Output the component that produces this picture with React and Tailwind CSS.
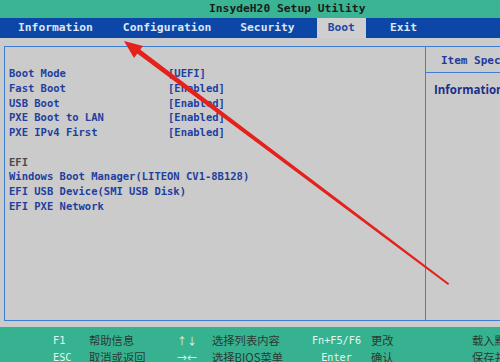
const mono = { fontFamily: '"DejaVu Sans Mono", "Liberation Mono", monospace' };

const tabs = [
  { label: "Information", ml: "ml-[7px]" },
  { label: "Configuration", ml: "ml-[8px]" },
  { label: "Security", ml: "ml-[7px]" },
  { label: "Boot", ml: "ml-[11px]", active: true },
  { label: "Exit", ml: "ml-[13px]" },
];

const items = [
  ["Boot Mode", "[UEFI]"],
  ["Fast Boot", "[Enabled]"],
  ["USB Boot", "[Enabled]"],
  ["PXE Boot to LAN", "[Enabled]"],
  ["PXE IPv4 First", "[Enabled]"],
];

const efi = [
  "Windows Boot Manager(LITEON CV1-8B128)",
  "EFI USB Device(SMI USB Disk)",
  "EFI PXE Network",
];

const footer = [
  ["F1", "帮助信息", "↑↓", "选择列表内容", "Fn+F5/F6", "更改", "载入默认值"],
  ["ESC", "取消或返回", "→←", "选择BIOS菜单", "Enter", "确认", "保存并退出"],
];

function Arrow() {
  return (
    <svg className="absolute left-0 top-0 pointer-events-none" width="500" height="362">
      <polygon points="448,285 449.2,283.4 137.5,47.5 134.5,51.5" fill="#e4211b" />
      <polygon points="124,41 143,46 134,58" fill="#e4211b" />
    </svg>
  );
}

export default function App() {
  return (
    <div className="relative w-[500px] h-[362px] overflow-hidden flex flex-col bg-[#cbcbcb]">
      <div
        className="h-[18px] shrink-0 bg-[#3ab493] pl-[209px] text-[11.3px] leading-[18px] font-bold text-[#1c1c1c]"
        style={mono}
      >
        InsydeH20 Setup Utility
      </div>

      <div className="h-[20px] shrink-0 bg-[#0c47a7] flex text-[11.3px] font-bold" style={mono}>
        {tabs.map(t => (
          <div
            key={t.label}
            className={`${t.ml} px-[11px] leading-[20px] ${t.active ? "bg-[#cfcfcf] text-[#1d4aa3]" : "text-[#dce6f3]"}`}
          >
            {t.label}
          </div>
        ))}
      </div>

      <div className="flex-1 min-h-0 pt-[8px] pl-[4px] pb-[6px]">
        <div className="h-full w-[540px] border border-[#3b7ed4] flex">
          <div className="w-[421px] shrink-0 border-r border-[#3b7ed4] pl-[4px] pt-[19px] text-[10.5px] leading-[14.75px] font-bold text-[#1f3f9e]" style={mono}>
            {items.map(([k, v]) => (
              <div key={k} className="flex">
                <span className="w-[159px] shrink-0">{k}</span>
                <span>{v}</span>
              </div>
            ))}
            <div className="h-[14.75px]" />
            <div className="text-[#4a4a4a]">EFI</div>
            {efi.map(e => (
              <div key={e}>{e}</div>
            ))}
          </div>

          <div className="flex-1 min-w-0 flex flex-col overflow-hidden">
            <div
              className="h-[26px] border-b border-[#3b7ed4] pl-[15px] pt-[6px] text-[11px] font-bold text-[#1f3a9c] whitespace-nowrap"
              style={mono}
            >
              Item Specific Help
            </div>
            <div
              className="pl-[8px] pt-[8px] text-[11.5px] font-bold text-[#1b2f8a] whitespace-nowrap"
              style={{ fontFamily: '"Open Sans", "Noto Sans CJK SC", sans-serif' }}
            >
              Information显示
            </div>
          </div>
        </div>
      </div>

      <div className="h-[35px] shrink-0 bg-[#37b290] pt-[5px]">
        {footer.map(r => (
          <div key={r[0]} className="flex h-[17px] items-center whitespace-nowrap text-[11.3px]" style={{ fontFamily: '"Noto Sans CJK SC", sans-serif' }}>
            <span className="ml-[53px] w-[36px] shrink-0 text-[10.2px] text-[#e3f6ef]" style={mono}>{r[0]}</span>
            <span className="w-[88px] shrink-0 text-[#2a3a33]">{r[1]}</span>
            <span className="w-[35px] shrink-0 text-[10px] text-[#e3f6ef]">{r[2]}</span>
            <span className="w-[90px] shrink-0 text-[#2a3a33]">{r[3]}</span>
            <span className="w-[69px] shrink-0 text-center text-[10.2px] text-[#e3f6ef]" style={mono}>{r[4]}</span>
            <span className="w-[101px] shrink-0 text-[#2a3a33]">{r[5]}</span>
            <span className="shrink-0 text-[#2a3a33]">{r[6]}</span>
          </div>
        ))}
      </div>

      <Arrow />
    </div>
  );
}
